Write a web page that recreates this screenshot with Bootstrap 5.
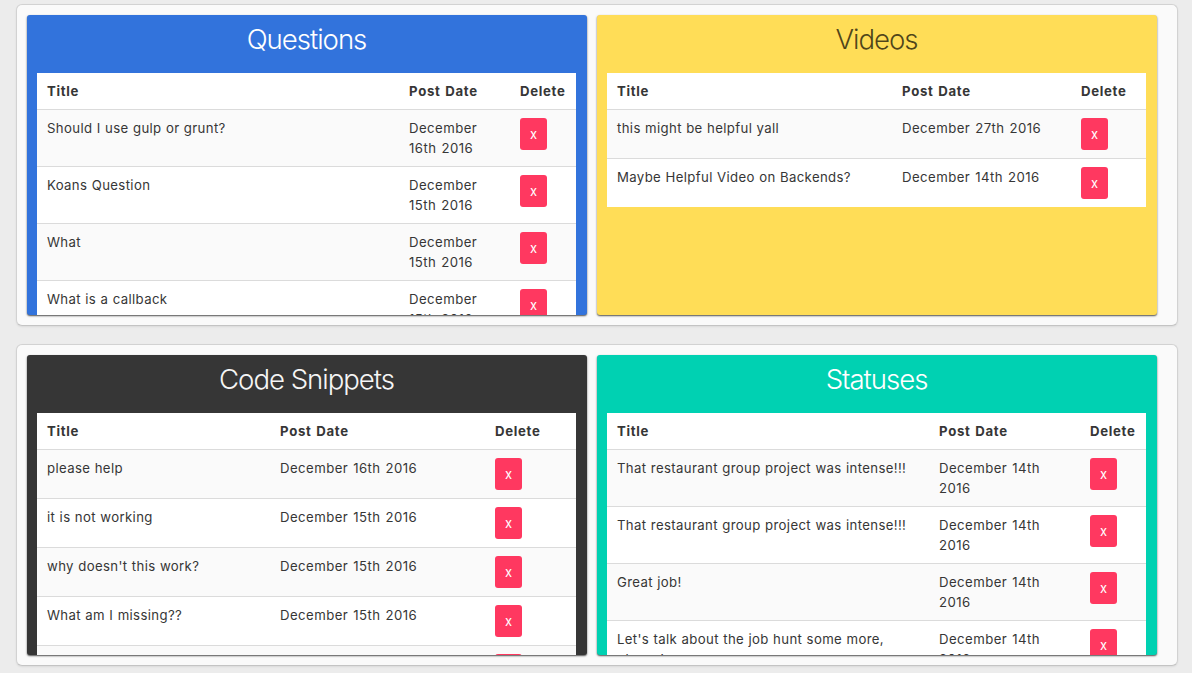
<!DOCTYPE html>
<html lang="en"><head><meta charset="utf-8"><title>Dashboard</title>
<link rel="stylesheet" href="https://cdn.jsdelivr.net/npm/bootstrap@5.3.0/dist/css/bootstrap.min.css">
<style>
body{background:#ececec;font-family:Inter,sans-serif;font-size:13.2px;line-height:20px;color:#363636;height:673px;overflow:hidden}
.board{width:1162px;height:322px;margin:4px 0 18px 16px;padding:10px;background:#fafafa;border:1px solid #d2d2d2;border-bottom-color:#c4c4c4;border-radius:6px;gap:10px;box-shadow:0 1px 2px rgba(0,0,0,.08)}
.panel{width:560px;height:300px;border-radius:3px;overflow:hidden;padding:0 11px 0 10px;box-shadow:0 1px 2px rgba(0,0,0,.6),0 1px 1px rgba(0,0,0,.15);color:#fff}
.panel h2{font-size:27.6px;font-weight:300;line-height:34px;letter-spacing:-1.03px;margin:7px 0 17px;text-align:center;white-space:nowrap}
.blue{background:#3273dc}.yellow{background:#ffdd57;color:rgba(0,0,0,.7)}.dark{background:#363636}.teal{background:#00d1b2}
.dark h2{color:#f5f5f5}
.posts{table-layout:fixed;width:539px;border-collapse:separate;border-spacing:0;background:#fff;color:#363636;margin:0}
.posts th,.posts td{padding:8px 10px;border-bottom:1px solid #dbdbdb;vertical-align:top;white-space:nowrap}
.posts td{letter-spacing:.36px;word-spacing:.3px}
.posts td:nth-child(2){letter-spacing:.43px;word-spacing:.9px}
.posts th{letter-spacing:.7px;word-spacing:.8px}
.posts tr:nth-child(odd) td{background:#fafafa}
.posts tbody tr:last-child td{border-bottom:0}
.del{display:block;width:27px;height:32px;border:0;border-radius:3px;background:#ff3860;color:#fff;font-size:13px;padding:0;line-height:32px}
</style></head><body>
<main id="main"></main>
<script src="https://cdn.jsdelivr.net/npm/bootstrap@5.3.0/dist/js/bootstrap.bundle.min.js"></script>
<script>
const panels=[
['Questions','blue',[362,111,66],[['Should I use gulp or grunt?','December<br>16th 2016'],['Koans Question','December<br>15th 2016'],['What','December<br>15th 2016'],['What is a callback','December<br>15th 2016']]],
['Videos','yellow',[285,179,75],[['this might be helpful yall','December 27th 2016'],['Maybe Helpful Video on Backends?','December 14th 2016']]],
['Code Snippets','dark',[233,215,91],[['please help','December 16th 2016'],['it is not working','December 15th 2016'],["why doesn't this work?",'December 15th 2016'],['What am I missing??','December 15th 2016'],['','']]],
['Statuses','teal',[322,151,66],[['That restaurant group project was intense!!!','December 14th<br>2016'],['That restaurant group project was intense!!!','December 14th<br>2016'],['Great job!','December 14th<br>2016'],["Let's talk about the job hunt some more,<br>please!",'December 14th<br>2016']]]];
const html=p=>`<section class="panel flex-shrink-0 ${p[1]}"><h2>${p[0]}</h2><table class="posts"><colgroup>${p[2].map(w=>`<col style="width:${w}px">`).join('')}</colgroup><thead><tr><th>Title</th><th>Post Date</th><th>Delete</th></tr></thead><tbody>${p[3].map(r=>`<tr><td>${r[0]}</td><td>${r[1]}</td><td><button class="del">x</button></td></tr>`).join('')}</tbody></table></section>`;
document.getElementById('main').innerHTML=[0,2].map(i=>`<div class="board d-flex">${html(panels[i])}${html(panels[i+1])}</div>`).join('');
</script></body></html>
